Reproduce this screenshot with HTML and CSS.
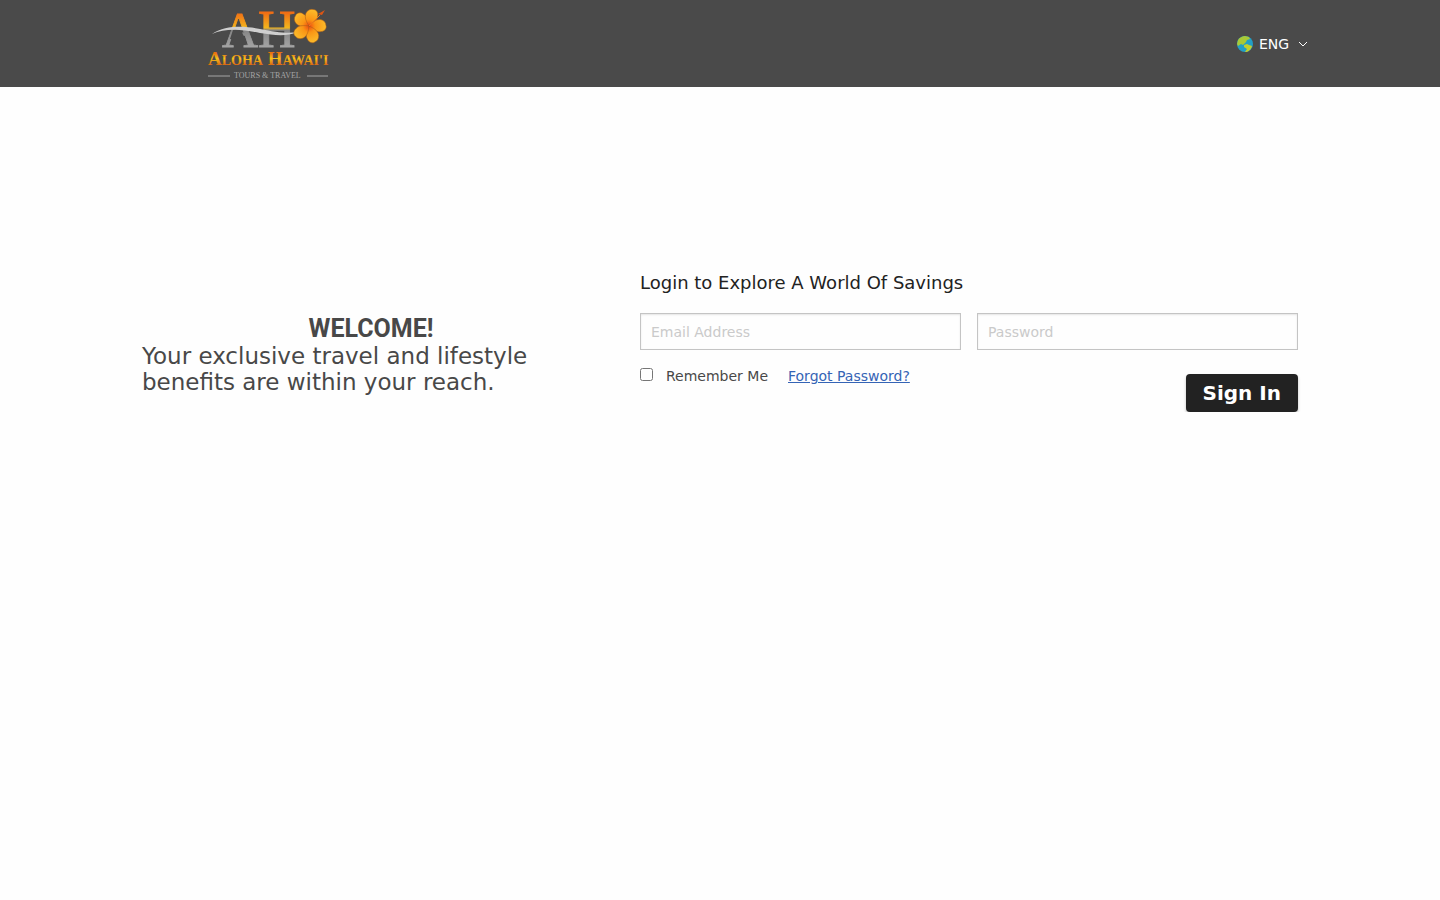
FILE: index.html
```html
<!DOCTYPE html>
<html lang="en">
<head>
    <meta charset="UTF-8">
    <meta name="viewport" content="width=device-width, initial-scale=1.0">
    <title>Aloha Hawai'i Tours &amp; Travel</title>
    <link rel="stylesheet" href="styles.css">
</head>
<body>
    <header class="header">
        <a href="#" class="logo" aria-label="Aloha Hawai'i Tours and Travel">
            <svg width="130" height="75" viewBox="0 0 130 75">
                <defs>
                    <linearGradient id="letters" gradientUnits="userSpaceOnUse" x1="0" y1="6" x2="0" y2="41">
                        <stop offset="0" stop-color="#f06a14"/>
                        <stop offset="0.45" stop-color="#f3b51c"/>
                        <stop offset="0.52" stop-color="#858585"/>
                        <stop offset="1" stop-color="#a4a4a4"/>
                    </linearGradient>
                    <linearGradient id="name" x1="0" y1="0" x2="0" y2="1">
                        <stop offset="0.25" stop-color="#e8720f"/>
                        <stop offset="0.5" stop-color="#f3c21c"/>
                        <stop offset="0.8" stop-color="#dd6a10"/>
                    </linearGradient>
                    <radialGradient id="petal" gradientUnits="userSpaceOnUse" cx="0" cy="0" r="18">
                        <stop offset="0" stop-color="#ee4a12"/>
                        <stop offset="0.35" stop-color="#fa9414"/>
                        <stop offset="1" stop-color="#fcbf2c"/>
                    </radialGradient>
                    <path id="leaf" d="M0 0C-3 -3 -7 -7 -6 -12C-5 -15 -3 -17 0 -17C3 -18 6 -15 6 -12C7 -7 3 -3 0 0Z"/>
                </defs>
                <g fill="url(#letters)" stroke="url(#letters)" stroke-width="0.8">
                    <text class="logo-letters logo-a" x="14" y="41">A</text>
                    <text class="logo-letters" x="50" y="41">H</text>
                </g>
                <!-- open the A under the wave -->
                <path d="M25 24H33L37 33H22Z" fill="#4a4a4a"/>
                <path d="M4 28C18 19 36 20 52 23S79 28 90 26C77 31 66 29 52 27C34 23 17 22 4 28Z" fill="#cfcfcf"/>
                <g transform="translate(101 20)" fill="url(#petal)" stroke="#a85a1a" stroke-width="0.5">
                    <use href="#leaf" transform="rotate(-52)"/>
                    <use href="#leaf" transform="rotate(14)"/>
                    <use href="#leaf" transform="rotate(88)"/>
                    <use href="#leaf" transform="rotate(160)"/>
                    <use href="#leaf" transform="rotate(232)"/>
                </g>
                <path d="M101 20L112 9" stroke="#e9791a"/>
                <path d="M110 8L117 4L114 9Z" fill="#dd5514"/>
                <text class="logo-name" x="0" y="59" fill="url(#name)">A<tspan class="logo-small">LOHA</tspan> H<tspan class="logo-small">AWAI'I</tspan></text>
                <path d="M0 70H22M99 70H120" stroke="#a5a5a5"/>
                <text class="logo-tag" x="26" y="72" fill="#a5a5a5">TOURS &amp; TRAVEL</text>
            </svg>
        </a>
        <label class="language">
            <svg width="16" height="16" viewBox="0 0 16 16">
                <circle cx="8" cy="8" r="8" fill="#239fc6"/>
                <path d="M1 4C3 1 6 0 8 0L12 1L13 3L10 4L9 6L6 9L4 8L1 10L0 8Z" fill="#a9c936"/>
                <path d="M7 9L10 8L12 9L15 10C14 14 11 16 8 16L10 13L7 11Z" fill="#c3cf2b"/>
            </svg>
            <select class="language-select" aria-label="Language">
                <option>ENG</option>
            </select>
            <svg width="10" height="6" viewBox="0 0 10 6">
                <path d="M1 1L5 5L9 1" fill="none" stroke="#fff"/>
            </svg>
        </label>
    </header>

    <main class="container">
        <section class="welcome">
            <h1>WELCOME!</h1>
            <p>Your exclusive travel and lifestyle benefits are within your reach.</p>
        </section>

        <form class="login">
            <h2>Login to Explore A World Of Savings</h2>
            <div class="fields">
                <input type="email" placeholder="Email Address" aria-label="Email Address">
                <input type="password" placeholder="Password" aria-label="Password">
            </div>
            <div class="actions">
                <div class="options">
                    <input type="checkbox" id="remember">
                    <label for="remember">Remember Me</label>
                    <a href="#">Forgot Password?</a>
                </div>
                <button type="submit">Sign In</button>
            </div>
        </form>
    </main>
</body>
</html>
```
FILE: styles.css
```css
* {
    box-sizing: border-box;
}
body {
    margin: 0;
    background-color: #fefefe;
    color: #484848;
    font-family: "DejaVu Sans", sans-serif;
    font-size: 14px;
}
h1, h2, p {
    margin: 0;
}
.header {
    display: flex;
    justify-content: space-between;
    align-items: center;
    padding: 6px 132px 6px 208px;
    background-color: #4a4a4a;
}
.logo svg {
    display: block;
    overflow: visible;
}
.logo-letters {
    font-family: "Liberation Serif", serif;
    font-size: 52px;
}
.logo-a {
    font-size: 50px;
}
.logo-name {
    font-family: "Liberation Serif", serif;
    font-size: 19px;
    font-weight: bold;
}
.logo-small {
    font-size: 14px;
}
.logo-tag {
    font-family: "Liberation Serif", serif;
    font-size: 8px;
}
.language {
    display: flex;
    align-items: center;
    color: #fff;
}
.language-select {
    appearance: none;
    margin: 0 8px 0 6px;
    padding: 0;
    border: none;
    background: none;
    color: #fff;
    font-family: inherit;
    font-size: 14px;
    cursor: pointer;
}
.container {
    display: grid;
    grid-template-columns: 458fr 658fr;
    gap: 40px;
    max-width: 1188px;
    margin: auto;
    padding: 184px 16px 0;
}
.welcome {
    padding-top: 44px;
}
.welcome h1 {
    font-family: Roboto, sans-serif;
    font-size: 25px;
    font-weight: bold;
    line-height: 28px;
    text-align: center;
}
.welcome p {
    font-size: 23px;
    line-height: 26px;
}
.login h2 {
    color: #222;
    font-size: 18px;
    font-weight: normal;
    line-height: 24px;
}
.fields {
    display: grid;
    grid-template-columns: 1fr 1fr;
    gap: 16px;
    margin-top: 18px;
}
.fields input {
    width: 100%;
    height: 37px;
    padding: 0 10px;
    border: 1px solid #c4c4c4;
    border-radius: 0;
    background-color: #fefefe;
    box-shadow: inset 0 1px 2px rgba(0, 0, 0, 0.1);
    font-family: inherit;
    font-size: 14px;
}
.fields input::placeholder {
    color: #cacaca;
}
.actions {
    display: flex;
    justify-content: space-between;
    align-items: flex-start;
    padding-top: 16px;
}
.options {
    display: flex;
    align-items: center;
    line-height: 20px;
}
.options input {
    margin: 0 13px 3px 0;
}
.options a {
    margin-left: 20px;
    color: #3564b5;
}
button {
    height: 38px;
    margin-top: 8px;
    padding: 0 17px;
    border: none;
    border-radius: 4px;
    background-color: #222;
    box-shadow: 0 2px 3px rgba(0, 0, 0, 0.25);
    color: #fff;
    font-family: inherit;
    font-size: 20px;
    font-weight: bold;
    cursor: pointer;
}
```
